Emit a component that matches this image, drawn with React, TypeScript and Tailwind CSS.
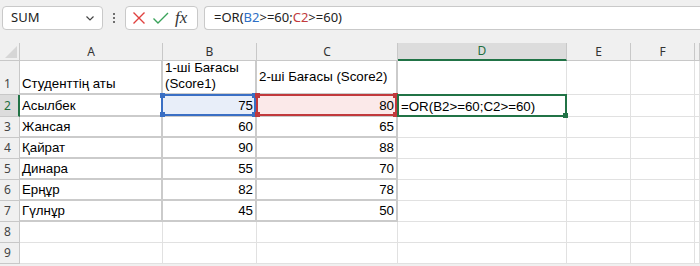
import React from "react";

const COLS = ["A", "B", "C", "D", "E", "F", ""];
const WIDTHS = [143, 94, 141, 169, 64, 64, 5];
const HEIGHTS = [34, 22, 21, 21, 21, 21, 21, 21, 21];

type Cell = { v: string; align?: "l" | "r" };
const data: Record<number, Cell[]> = {
  1: [{ v: "Студенттің аты" }, { v: "1-ші Бағасы\n(Score1)" }, { v: "2-ші Бағасы (Score2)" }],
  2: [{ v: "Асылбек" }, { v: "75", align: "r" }, { v: "80", align: "r" }, { v: "=OR(B2>=60;C2>=60)" }],
  3: [{ v: "Жансая" }, { v: "60", align: "r" }, { v: "65", align: "r" }],
  4: [{ v: "Қайрат" }, { v: "90", align: "r" }, { v: "88", align: "r" }],
  5: [{ v: "Динара" }, { v: "55", align: "r" }, { v: "70", align: "r" }],
  6: [{ v: "Ерңұр" }, { v: "82", align: "r" }, { v: "78", align: "r" }],
  7: [{ v: "Гүлнұр" }, { v: "45", align: "r" }, { v: "50", align: "r" }],
};

function Corners({ color, all }: { color: string; all: boolean }) {
  const sq = "absolute w-[5px] h-[5px] z-30";
  return (
    <>
      {all && <span className={`${sq} -left-[3px] -top-[3px]`} style={{ background: color }} />}
      {all && <span className={`${sq} -left-[3px] -bottom-[3px]`} style={{ background: color }} />}
      {all && <span className={`${sq} -right-[3px] -top-[3px]`} style={{ background: color }} />}
      <span className={`${sq} -right-[3px] -bottom-[3px]`} style={{ background: color }} />
    </>
  );
}

export default function App() {
  const font = { fontFamily: '"Liberation Sans", Arial, sans-serif' };
  const uiFont = { fontFamily: '"Noto Sans", "Open Sans", sans-serif' };
  return (
    <div className="w-[700px] h-[266px] overflow-hidden bg-[#f0f0f0] relative" style={font}>
      {/* Formula bar */}
      <div className="flex items-center h-[43px] pt-[1px] pb-[9px] pl-[2px] gap-0">
        <div className="w-[101px] h-[24px] bg-white border border-[#c9c9c9] rounded-[4px] flex items-center justify-between pl-[8px] pr-[6px] text-[13px] text-[#222]" style={uiFont}>
          <span>SUM</span>
          <svg width="12" height="12" viewBox="0 0 12 12" fill="none" stroke="#444" strokeWidth="1.2">
            <path d="M2.5 4.5 L6 8 L9.5 4.5" />
          </svg>
        </div>
        <div className="w-[22px] flex flex-col items-center justify-center gap-[2px]">
          <span className="w-[2px] h-[2px] bg-[#444] rounded-full" />
          <span className="w-[2px] h-[2px] bg-[#444] rounded-full" />
          <span className="w-[2px] h-[2px] bg-[#444] rounded-full" />
        </div>
        <div className="w-[73px] h-[24px] bg-white border border-[#c9c9c9] rounded-[4px] flex items-center pl-[5px] gap-[5px]">
          <svg width="16" height="16" viewBox="0 0 16 16" fill="none" stroke="#e0413f" strokeWidth="1.4">
            <path d="M2.5 2.5 L13.5 13.5 M13.5 2.5 L2.5 13.5" />
          </svg>
          <svg width="18" height="16" viewBox="0 0 18 16" fill="none" stroke="#3aa25a" strokeWidth="1.4">
            <path d="M1.5 8.5 L6 13 L16 3" />
          </svg>
          <span className="text-[17px] italic text-[#333] leading-none" style={{ fontFamily: '"Liberation Serif", "DejaVu Serif", serif' }}>
            fx
          </span>
        </div>
        <div className="flex-1 ml-[6px] h-[24px] bg-white border border-r-0 border-[#c9c9c9] rounded-l-[4px] flex items-center pl-[9px] text-[13px] text-[#222]" style={uiFont}>
          <span>=OR(</span>
          <span className="text-[#2f6fc6]">B2</span>
          <span>&gt;=60;</span>
          <span className="text-[#c23b3d]">C2</span>
          <span>&gt;=60)</span>
        </div>
      </div>

      {/* Grid */}
      <div
        className="grid bg-white"
        style={{
          gridTemplateColumns: `20px ${WIDTHS.map((w) => w + "px").join(" ")}`,
          gridTemplateRows: `18px ${HEIGHTS.map((h) => h + "px").join(" ")}`,
        }}
      >
        {/* header row */}
        <div className="bg-[#f0f0f0] border-r border-b border-[#c8c8c8] relative">
          <svg className="absolute right-[2px] bottom-[2px]" width="12" height="12" viewBox="0 0 12 12">
            <path d="M12 0 L12 12 L0 12 Z" fill="#d6d6d6" />
          </svg>
        </div>
        {COLS.map((c, i) => {
          const sel = c === "D";
          return (
            <div
              key={i}
              className={`flex items-center justify-center text-[12px] border-r ${
                sel
                  ? "bg-[#dcdcdc] text-[#1e6e3e] border-b-2 border-b-[#217346] border-r-[#c8c8c8]"
                  : "bg-[#f0f0f0] text-[#333] border-b border-[#c8c8c8]"
              }`}
              style={uiFont}
            >
              {c}
            </div>
          );
        })}

        {HEIGHTS.map((_, ri) => {
          const r = ri + 1;
          const row = data[r] || [];
          const selRow = r === 2;
          return (
            <React.Fragment key={r}>
              <div
                className={`flex items-end justify-start pl-[4px] pb-[1px] text-[12px] border-b ${
                  selRow
                    ? "bg-[#dcdcdc] text-[#1e6e3e] border-r-2 border-r-[#217346] border-b-[#c8c8c8]"
                    : "bg-[#f0f0f0] text-[#444] border-r border-[#c8c8c8]"
                }`}
                style={uiFont}
              >
                {r}
              </div>
              {COLS.map((c, ci) => {
                const cell = row[ci];
                const inTable = r <= 7 && ci <= 2;
                const border = inTable
                  ? "border-r-2 border-b-2 border-[#cbcbcb]"
                  : "border-r border-b border-[#e1e1e1]";
                const isB2 = r === 2 && c === "B";
                const isC2 = r === 2 && c === "C";
                const isD2 = r === 2 && c === "D";
                const vCenter = r === 1 && c === "C";
                return (
                  <div
                    key={ci}
                    className={`relative ${border} flex ${vCenter ? "items-center" : "items-end"} ${
                      cell?.align === "r" ? "justify-end pr-[2px]" : "justify-start pl-[2px]"
                    } pb-[1px] text-[13.3px] text-black leading-[16px] whitespace-pre`}
                  >
                    {isB2 && (
                      <div className="absolute -left-[2px] -top-[1px] -right-[1px] -bottom-[1px] border-2 border-[#3a6fc4] bg-[#e8eef9] z-10">
                        <Corners color="#3a6fc4" all />
                      </div>
                    )}
                    {isC2 && (
                      <div className="absolute -left-[1px] -top-[1px] -right-[1px] -bottom-[1px] border-2 border-[#c1393c] bg-[#fbe9e9] z-10">
                        <Corners color="#c1393c" all />
                      </div>
                    )}
                    {isD2 && (
                      <div className="absolute -left-[1px] -top-[1px] -right-[1px] -bottom-[1px] border-2 border-[#217346] z-10">
                        <Corners color="#217346" all={false} />
                      </div>
                    )}
                    {cell && <span className={`relative z-20 ${isD2 ? "pl-[1px]" : ""}`}>{cell.v}</span>}
                  </div>
                );
              })}
            </React.Fragment>
          );
        })}
      </div>
    </div>
  );
}
